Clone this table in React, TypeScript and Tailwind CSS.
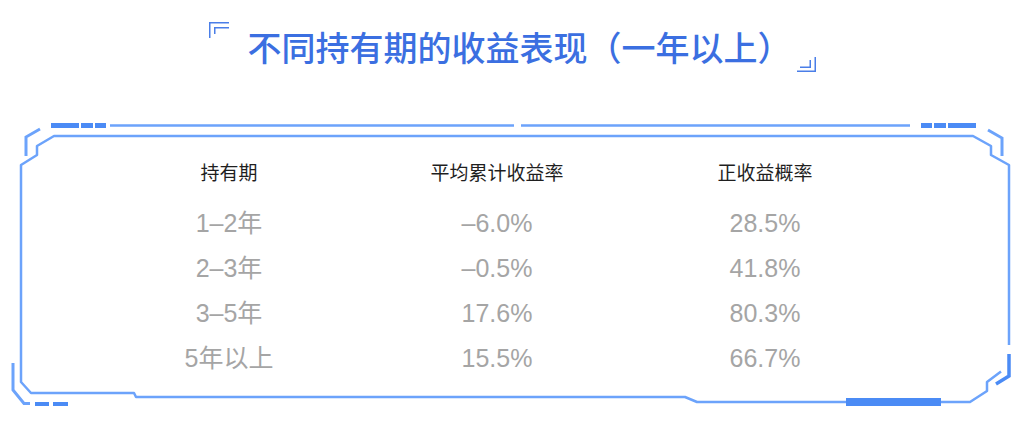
const rows = [
  { period: "1–2年", avg: "–6.0%", prob: "28.5%" },
  { period: "2–3年", avg: "–0.5%", prob: "41.8%" },
  { period: "3–5年", avg: "17.6%", prob: "80.3%" },
  { period: "5年以上", avg: "15.5%", prob: "66.7%" },
];

const cjk = { fontFamily: '"Noto Sans CJK SC", sans-serif' };
const num = { fontFamily: '"Liberation Sans", "Noto Sans CJK SC", sans-serif' };

function FrameDecor() {
  const line = "#6ca3fb";
  const bar = "#4b8bf5";
  return (
    <svg
      className="absolute left-0 top-0 pointer-events-none"
      width={1035}
      height={439}
      viewBox="0 0 1035 439"
      fill="none"
    >
      {/* top dashes + outer line */}
      <rect x={51} y={123} width={28} height={5} fill={bar} />
      <rect x={81} y={123} width={12} height={5} fill={bar} />
      <rect x={95} y={123} width={11} height={5} fill={bar} />
      <path d="M110 125.5 H514 M521 125.5 H910" stroke={line} strokeWidth={2.5} />
      <rect x={921} y={123} width={11} height={5} fill={bar} />
      <rect x={934} y={123} width={12} height={5} fill={bar} />
      <rect x={948} y={123} width={28} height={5} fill={bar} />

      {/* outer corner ticks */}
      <path d="M40 129 L26 137 V156" stroke={line} strokeWidth={3} />
      <path d="M988 130 L1002 138 V156" stroke={line} strokeWidth={3} />

      {/* main frame */}
      <path
        d="M1009 345 V165 L991 155 V146 L973 136 H54 L37 146 V155 L21 165 V382 L31 393 H134 L136 397 H685 L697 402 H970 L987 391 V382 L1001 371.5"
        stroke={line}
        strokeWidth={2.5}
        strokeLinejoin="round"
      />
      <path d="M1009 354 V376 L996 384" stroke={bar} strokeWidth={3.5} />
      <rect x={846} y={398} width={95} height={8} fill={bar} />

      {/* bottom-left outer */}
      <path d="M13 363 V390 L24 403.5 H30" stroke={line} strokeWidth={3} />
      <rect x={35} y={402} width={14} height={4} fill={bar} />
      <rect x={53} y={402} width={15} height={4} fill={bar} />
    </svg>
  );
}

function CornerTL() {
  return (
    <svg width={20} height={16} viewBox="0 0 20 16" fill="none">
      <path d="M0.75 16 V0.75 H20 M5.75 12 V5.75 H20" stroke="#4a7ee8" strokeWidth={1.5} />
    </svg>
  );
}

function CornerBR() {
  return (
    <svg width={19} height={15} viewBox="0 0 19 15" fill="none">
      <path d="M0 14.25 H18.25 V0 M3 10.25 H13.25 V3" stroke="#4a7ee8" strokeWidth={1.5} />
    </svg>
  );
}

export default function App() {
  return (
    <div className="relative w-[1035px] h-[439px] overflow-hidden bg-white">
      <FrameDecor />

      {/* Title */}
      <div className="relative flex justify-center pt-[22px] pr-[11px]">
        <div className="flex items-start">
          <CornerTL />
          <h1
            className="ml-[19px] mt-[8px] text-[34px] leading-[34px] font-medium text-[#3b6fe1] whitespace-nowrap"
            style={cjk}
          >
            不同持有期的收益表现（一年以上）
          </h1>
          <div className="ml-[5px] mt-[35px]">
            <CornerBR />
          </div>
        </div>
      </div>

      {/* Table */}
      <div className="relative mt-[78px] pl-[95px]">
        <div className="grid grid-cols-[268px_268px_268px]">
          {["持有期", "平均累计收益率", "正收益概率"].map((h) => (
            <div
              key={h}
              className="h-[45px] flex items-center justify-center text-[19px] text-[#1f1f1f]"
              style={cjk}
            >
              {h}
            </div>
          ))}
        </div>
        <div className="mt-[6px]">
          {rows.map((r) => (
            <div key={r.period} className="grid grid-cols-[268px_268px_268px] h-[45px]">
              {[r.period, r.avg, r.prob].map((v, i) => (
                <div
                  key={i}
                  className="flex items-center justify-center text-[25px] text-[#a5a5a5]"
                  style={num}
                >
                  {v}
                </div>
              ))}
            </div>
          ))}
        </div>
      </div>
    </div>
  );
}
